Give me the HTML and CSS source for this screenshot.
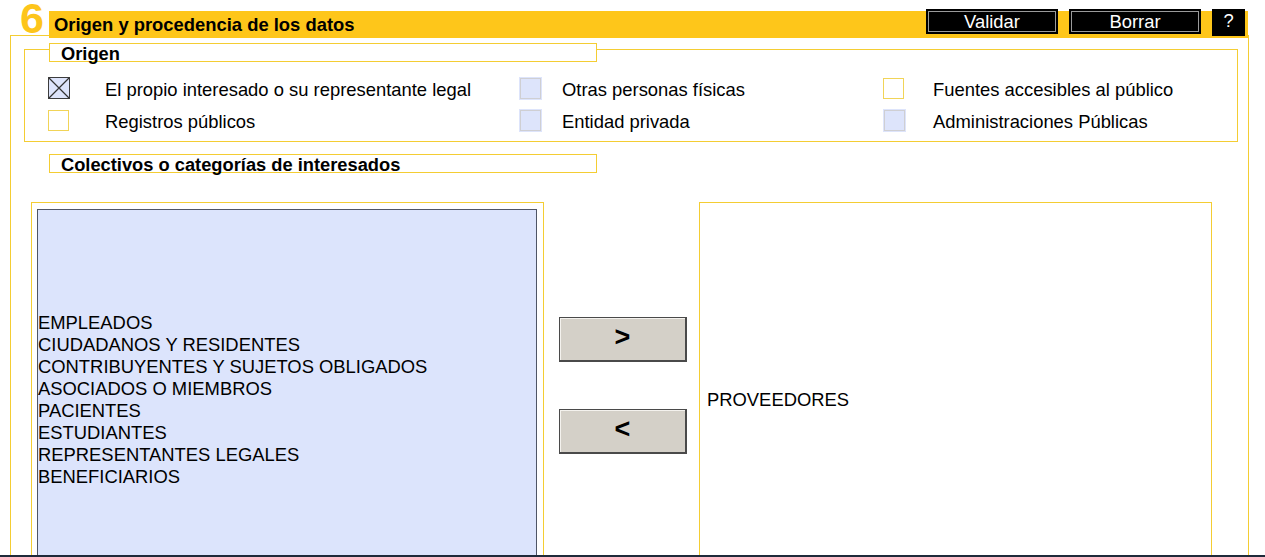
FILE: index.html
```html
<!DOCTYPE html>
<html lang="es">
<head>
<meta charset="utf-8">
<title>Origen y procedencia de los datos</title>
<link rel="stylesheet" href="styles.css">
</head>
<body>
<div class="screen">
  <div class="head">
    <div class="num">6</div>
    <div class="bar">
      <span class="title">Origen y procedencia de los datos</span>
      <span class="btn-dark first">Validar</span>
      <span class="btn-dark">Borrar</span>
      <span class="btn-help">?</span>
    </div>
  </div>
  <div class="panel">
    <div class="legend legend-origen">Origen</div>
    <div class="fieldset">
      <div class="checks">
        <span class="cb cb-checked"><svg viewBox="0 0 22 22" width="22" height="22"><path d="M1 1 L21 21 M21 1 L1 21" stroke="#333" stroke-width="1.2" fill="none"/></svg></span>
        <span class="lbl">El propio interesado o su representante legal</span>
        <span class="cb cb-blue"></span>
        <span class="lbl">Otras personas físicas</span>
        <span class="cb cb-yellow"></span>
        <span class="lbl">Fuentes accesibles al público</span>
        <span class="cb cb-yellow"></span>
        <span class="lbl">Registros públicos</span>
        <span class="cb cb-blue"></span>
        <span class="lbl">Entidad privada</span>
        <span class="cb cb-blue"></span>
        <span class="lbl">Administraciones Públicas</span>
      </div>
    </div>
    <div class="legend legend-colectivos">Colectivos o categorías de interesados</div>
    <div class="lists">
      <div class="listbox">
        <div class="select">
          <div>EMPLEADOS</div>
          <div>CIUDADANOS Y RESIDENTES</div>
          <div>CONTRIBUYENTES Y SUJETOS OBLIGADOS</div>
          <div>ASOCIADOS O MIEMBROS</div>
          <div>PACIENTES</div>
          <div>ESTUDIANTES</div>
          <div>REPRESENTANTES LEGALES</div>
          <div>BENEFICIARIOS</div>
        </div>
      </div>
      <div class="movers">
        <span class="mv">&gt;</span>
        <span class="mv">&lt;</span>
      </div>
      <div class="listbox listbox-right">
        <div>PROVEEDORES</div>
      </div>
    </div>
  </div>
</div>
<div class="taskbar"></div>
</body>
</html>
```
FILE: styles.css
```css
html, body {
  margin: 0;
  padding: 0;
  background: #ffffff;
}
body {
  width: 1265px;
  height: 557px;
  overflow: hidden;
  display: flex;
  flex-direction: column;
  font-family: "Liberation Sans", Arial, sans-serif;
  font-size: 18.4px;
  color: #000;
}
.screen {
  height: 555px;
  overflow: hidden;
  display: flex;
  flex-direction: column;
}
.head {
  display: flex;
  align-items: flex-start;
  height: 35px;
  flex: none;
}
.num {
  width: 29px;
  padding-left: 20px;
  padding-top: 2px;
  height: 33px;
  font-size: 43px;
  font-weight: bold;
  line-height: 33px;
  color: #fdc51b;
}
.bar {
  position: relative;
  z-index: 1;
  flex: 1;
  margin-top: 11px;
  margin-right: 17px;
  height: 27px;
  background: #fec61a;
  display: flex;
  align-items: flex-start;
}
.title {
  font-weight: bold;
  font-size: 18.4px;
  line-height: 27px;
  padding-left: 5px;
}
.btn-dark {
  margin-top: -2px;
  width: 132px;
  height: 25px;
  box-sizing: border-box;
  background: #000;
  color: #fff;
  border: 2px solid #000;
  box-shadow: inset 0 0 0 1px #9a9a9a;
  text-align: center;
  line-height: 21px;
  font-size: 18.4px;
  margin-left: 11px;
}
.btn-dark.first {
  margin-left: auto;
}
.btn-help {
  margin-top: -2px;
  margin-left: 11px;
  margin-right: 3px;
  width: 33px;
  height: 27px;
  background: #000;
  color: #fff;
  text-align: center;
  line-height: 24px;
  font-size: 18.4px;
}
.panel {
  flex: 1;
  margin-left: 10px;
  margin-right: 16px;
  border: 1px solid #f4cd33;
  border-bottom: 0;
  display: flex;
  flex-direction: column;
  align-items: flex-start;
}
.legend {
  position: relative;
  z-index: 1;
  margin-left: 38px;
  width: 535px;
  height: 17px;
  border: 1px solid #f4cd33;
  background: #fff;
  font-weight: bold;
  font-size: 18.3px;
  line-height: 19px;
  padding-left: 11px;
  box-sizing: content-box;
}
.legend-origen {
  margin-top: 7px;
}
.legend-colectivos {
  margin-top: 12px;
}
.fieldset {
  align-self: stretch;
  margin: -13px 10px 0 13px;
  height: 91px;
  border: 1px solid #f4cd33;
}
.checks {
  display: grid;
  grid-template-columns: 57px 414px 43px 321px 50px 1fr;
  grid-auto-rows: 32px;
  align-items: center;
  padding-left: 23px;
  padding-top: 22px;
}
.cb {
  display: block;
  width: 22px;
  height: 22px;
  box-sizing: border-box;
}
.cb svg {
  display: block;
}
.cb-checked {
  background: #dde4fb;
  border: 1px solid #3c3c3c;
}
.cb-checked svg {
  margin: -1px;
}
.cb-yellow {
  width: 21px;
  height: 21px;
  background: #fff;
  border: 1px solid #f1d458;
}
.cb-blue {
  width: 23px;
  height: 23px;
  background: #dde4fb;
  border: 1px solid #dde4fb;
  box-shadow: inset 0 0 0 1px #cfcfd3;
}
.lbl {
  white-space: nowrap;
  padding-top: 3px;
}
.lists {
  margin-top: 29px;
  margin-left: 20px;
  display: flex;
  align-items: flex-start;
}
.listbox {
  width: 500px;
  height: 392px;
  border: 1px solid #f4cd33;
  padding: 6px 6px 0 5px;
  box-sizing: content-box;
}
.select {
  width: 500px;
  height: 380px;
  border: 1px solid #4f5566;
  background: #dce4fc;
  display: flex;
  flex-direction: column;
  justify-content: center;
  line-height: 22px;
  padding-top: 2px;
  box-sizing: border-box;
}
.listbox-right {
  margin-left: 12px;
  padding: 0 6px 0 7px;
  width: 498px;
  height: 394px;
  display: flex;
  flex-direction: column;
  justify-content: center;
}
.movers {
  margin-left: 15px;
  padding-top: 115px;
  display: flex;
  flex-direction: column;
  gap: 47px;
}
.mv {
  display: block;
  width: 128px;
  height: 45px;
  box-sizing: border-box;
  background: #d4d0c8;
  border: 1px solid #4a4a4a;
  border-right-width: 2px;
  border-bottom-width: 2px;
  box-shadow: inset 1px 1px 0 #f4f2ee;
  text-align: center;
  font-weight: bold;
  font-size: 27px;
  line-height: 38px;
}
.taskbar {
  height: 2px;
  background: #1f2a3a;
  flex: none;
}
```
